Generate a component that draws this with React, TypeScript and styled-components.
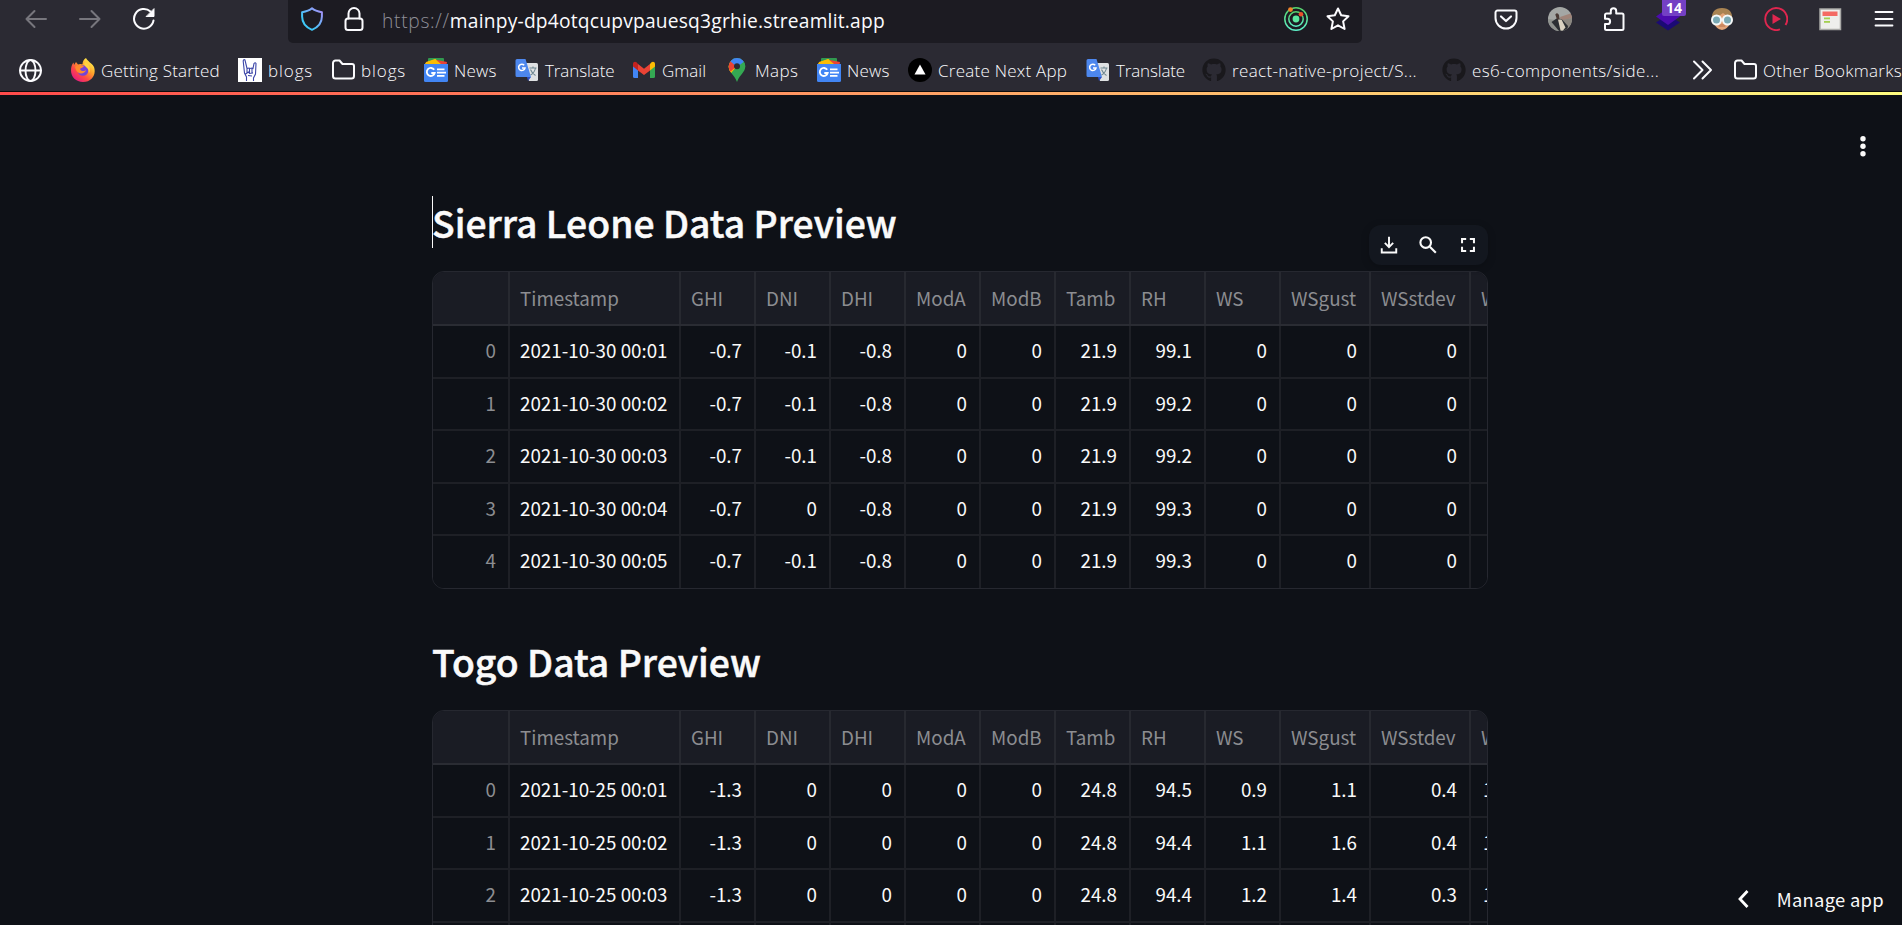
import React from "react";
import styled, { createGlobalStyle } from "styled-components";
import { FaGithub } from "react-icons/fa";

const GlobalStyle = createGlobalStyle`
  *, *::before, *::after { box-sizing: border-box; }
  html, body { margin: 0; padding: 0; background: #0e1117; }
  body { width: 1902px; height: 925px; overflow: hidden; }
  svg { display: block; flex: none; }
`;

const uiFont = `"Open Sans", "Noto Sans", sans-serif`;
const appFont = `"Noto Sans CJK SC", "Noto Sans", sans-serif`;

const Screen = styled.div`
  width: 1902px;
  height: 925px;
  display: flex;
  flex-direction: column;
  overflow: hidden;
`;

/* ---------- browser chrome ---------- */

const Chrome = styled.header`
  flex: none;
  height: 92px;
  background: #2b2a33;
  border-bottom: 1px solid #0c0c0d;
  color: #fbfbfe;
  font-family: ${uiFont};
`;

const NavBar = styled.div`
  height: 43px;
  display: flex;
  align-items: flex-start;
`;

const NavButtons = styled.div`
  width: 288px;
  height: 38px;
  padding-left: 24px;
  display: flex;
  align-items: center;
  gap: 30px;
`;

const UrlBar = styled.div`
  width: 1074px;
  height: 43px;
  padding: 0 12px 5px 12px;
  display: flex;
  align-items: center;
  background: #1c1b22;
  border-radius: 0 0 5px 5px;
`;

const UrlText = styled.div`
  flex: 1;
  margin-left: 16px;
  padding-top: 4px;
  font-size: 19.2px;
  line-height: 26px;
  white-space: nowrap;
  letter-spacing: 0.22px;
`;

const Scheme = styled.span`
  color: #8f8f98;
  font-weight: 300;
  letter-spacing: 0.7px;
`;

const UrlActions = styled.div`
  display: flex;
  gap: 18px;
`;

const Extensions = styled.div`
  flex: 1;
  height: 38px;
  padding-left: 132px;
  display: flex;
  align-items: center;
  gap: 30px;
`;

const BadgeHolder = styled.div`
  position: relative;
`;

const Badge = styled.span`
  position: absolute;
  left: 6px;
  top: -7px;
  width: 24px;
  height: 16px;
  border-radius: 0 0 2px 2px;
  background: #7440c4;
  color: #fff;
  font: 700 14px/16px "Open Sans", sans-serif;
  text-align: center;
`;

const Bookmarks = styled.nav`
  height: 48px;
  padding: 6px 0 0 18px;
  display: flex;
  align-items: center;
`;

const Bookmark = styled.div<{ $w: number }>`
  flex: none;
  width: ${(p) => p.$w}px;
  height: 24px;
  display: flex;
  align-items: center;
  gap: 6px;
`;

const BookmarkLabel = styled.span<{ $ls?: number }>`
  padding-top: 1px;
  font-size: 17px;
  font-weight: 300;
  line-height: 24px;
  white-space: nowrap;
  letter-spacing: ${(p) => p.$ls ?? 0}px;
`;

/* ---------- app ---------- */

const GradientLine = styled.div`
  flex: none;
  height: 3px;
  background: linear-gradient(90deg, #ff4b4b, #fffd80);
`;

const AppView = styled.main`
  flex: 1;
  min-height: 0;
  display: flex;
  justify-content: space-between;
  background: #0e1117;
  color: #fafafa;
  font-family: ${appFont};
`;

const Gutter = styled.div`
  width: 432px;
`;

const Content = styled.div`
  width: 1056px;
  padding-top: 101px;
`;

const SideTools = styled.aside`
  width: 414px;
  display: flex;
  flex-direction: column;
  justify-content: space-between;
  align-items: flex-end;
  padding: 39px 18px 8px 0;
`;

const MenuButton = styled.div`
  margin-right: 9px;
`;

const ManageApp = styled.div`
  display: flex;
  align-items: center;
  gap: 27px;
  font-size: 18.4px;
  line-height: 36px;
  letter-spacing: 0.28px;
  font-weight: 400;
`;

const Preview = styled.section`
  height: 439px;
`;

const TitleRow = styled.div`
  height: 75px;
  display: flex;
  justify-content: space-between;
  align-items: flex-start;
`;

const Title = styled.h2<{ $caret?: boolean }>`
  margin: 0;
  height: 52px;
  border-left: 1px solid ${(p) => (p.$caret ? "#fafafa" : "transparent")};
  font-size: 37.3px;
  line-height: 52px;
  font-weight: 500;
  text-indent: -1px;
  -webkit-text-stroke: 0.5px #fafafa;
  white-space: nowrap;
`;

const FrameTools = styled.div`
  width: 119px;
  height: 40px;
  margin-top: 29px;
  border-radius: 12px;
  background: #13171f;
  box-shadow: 0 2px 8px rgba(0, 0, 0, 0.2);
  display: flex;
  align-items: center;
  justify-content: center;
  gap: 17px;
`;

const Frame = styled.div`
  height: 318px;
  border: 1px solid #262830;
  border-radius: 12px;
  overflow: hidden;
`;

const Row = styled.div<{ $head?: boolean }>`
  display: grid;
  grid-template-columns: 77px 171px 75px 75px 75px 75px 75px 75px 75px 75px 90px 100px 73px;
  height: ${(p) => (p.$head ? 54 : 52.5)}px;
  border-bottom: 2px solid ${(p) => (p.$head ? "#2a2c33" : "#1e2026")};
  background: ${(p) => (p.$head ? "#1a1c24" : "#0e1117")};
  &:last-child { border-bottom: none; }
`;

const Cell = styled.div<{ $head?: boolean; $dim?: boolean }>`
  padding: 0 12px 0 10px;
  border-right: 2px solid ${(p) => (p.$head ? "#272930" : "#1e2026")};
  font-size: 18.8px;
  line-height: ${(p) => (p.$head ? 51 : 48)}px;
  white-space: nowrap;
  text-align: ${(p) => (p.$head ? "left" : "right")};
  color: ${(p) => (p.$dim ? "#8c8d91" : "#fafafa")};
`;

/* ---------- icons ---------- */

const Stroke = ({ size = 24, w = 2, color = "#fbfbfe", children }: { size?: number; w?: number; color?: string; children: React.ReactNode }) => (
  <svg width={size} height={size} viewBox="0 0 24 24" fill="none" stroke={color} strokeWidth={w} strokeLinecap="round" strokeLinejoin="round">
    {children}
  </svg>
);

const BackIcon = () => <Stroke color="#77767d"><path d="M22 12H2.5M10.5 4L2.5 12l8 8" /></Stroke>;
const ForwardIcon = () => <Stroke color="#77767d"><path d="M2 12h19.500M13.500 4l8 8-8 8" /></Stroke>;
const ReloadIcon = () => (
  <Stroke>
    <path d="M21.500 13.500A9.800 9.800 0 1 1 18.500 4.600" />
    <path d="M22 2v7.500h-7.500z" fill="#fbfbfe" strokeWidth="1" />
  </Stroke>
);
const ShieldIcon = () => (
  <svg width="24" height="24" viewBox="0 0 24 24" fill="none">
    <defs>
      <linearGradient id="shield" x1="0" y1="1" x2="1" y2="0">
        <stop offset="0.3" stopColor="#3fc8f8" />
        <stop offset="1" stopColor="#b08cf8" />
      </linearGradient>
    </defs>
    <path d="M12 1.200c2.500 2.200 6 3.300 9.900 4v4.300c0 6-3.400 10.600-9.900 13.300C5.500 20.100 2.100 15.500 2.100 9.500V5.200c3.900-.7 7.400-1.800 9.900-4z" stroke="url(#shield)" strokeWidth="2" strokeLinejoin="round" />
  </svg>
);
const LockIcon = () => <Stroke><rect x="3.500" y="11.500" width="17" height="11.500" rx="2.500" /><path d="M6.500 11.500V6.500a5.500 5.500 0 0 1 11 0v5" /></Stroke>;
const OrbitIcon = () => (
  <svg width="24" height="24" viewBox="0 0 24 24" fill="none">
    <defs>
      <linearGradient id="orbit" x1="0" y1="0" x2="0" y2="1">
        <stop stopColor="#55d06a" />
        <stop offset="1" stopColor="#5ef0c8" />
      </linearGradient>
    </defs>
    <circle cx="12" cy="12" r="11.200" stroke="url(#orbit)" strokeWidth="1.500" />
    <circle cx="12" cy="12" r="7.200" stroke="url(#orbit)" strokeWidth="1.500" />
    <circle cx="12" cy="12" r="3.400" fill="#5be8a0" />
    <circle cx="6.500" cy="2.600" r="2.400" fill="#f0832a" />
    <circle cx="17" cy="7.300" r="2.300" fill="#e8502a" />
  </svg>
);
const StarIcon = () => <Stroke><path d="M12 1.500l3.200 6.800 7.300.9-5.400 5.200 1.500 7.600L12 18.300 5.400 22l1.500-7.600L1.500 9.200l7.300-.9z" /></Stroke>;
const PocketIcon = () => <Stroke><path d="M3.500 3.500h17a2 2 0 0 1 2 2v5.500a10.500 10.500 0 0 1-21 0V5.500a2 2 0 0 1 2-2z" /><path d="M7 9.500l5 4.500 5-4.500" strokeWidth="2.200" /></Stroke>;
const AvatarIcon = () => (
  <svg width="24" height="24" viewBox="0 0 24 24">
    <defs><clipPath id="avatar"><circle cx="12" cy="12" r="12" /></clipPath></defs>
    <g clipPath="url(#avatar)">
      <rect width="24" height="24" fill="#a4a7a5" />
      <path d="M0 12l8 1 5 11H0z" fill="#8f928e" />
      <path d="M12 10l12-4v5l-11 3z" fill="#a08479" />
      <path d="M14 13l10-2v13h-7z" fill="#8b8780" />
      <path d="M3.500 15l5-3.500 5 .5 6.500 7-1 5h-8z" fill="#2c2f33" />
      <path d="M10 12.500l3.500 0 4 8-3 3.500-2-.5z" fill="#dad2c2" />
      <path d="M7.300 7.500q2-2.500 3.700.5l.5 4-2.500.5z" fill="#493a35" />
    </g>
  </svg>
);
const PuzzleIcon = () => <Stroke><path d="M3 9.500V8a1.500 1.500 0 0 1 1.500-1.500h4.300V4a2.700 2.700 0 0 1 5.400 0v2.500H20A1.500 1.500 0 0 1 21.500 8v13.500A1.500 1.500 0 0 1 20 23H4.500A1.500 1.500 0 0 1 3 21.500V17h2.500a2.600 2.600 0 0 0 0-5.200H3z" /></Stroke>;
const StackIcon = () => (
  <svg width="24" height="24" viewBox="0 0 24 24">
    <path d="M0 15.500L12 8l12 7.500-12 8z" fill="#1b0a75" />
    <path d="M0 9.500L12 1l12 8.500-12 8.500z" fill="#4c0cae" />
  </svg>
);
const FaceIcon = () => (
  <svg width="24" height="24" viewBox="0 0 24 24">
    <path d="M2 13C1 5 5 1 12 1s11 4 10 12z" fill="#a98352" />
    <path d="M4 9q5 1 9-3 3 3 7 3v7q-2 6-8 7-6-1-8-7z" fill="#e3a478" />
    <path d="M8 18q4-2 8 0l-1 2H9z" fill="#cc8860" />
    <g fill="#7aa9b4" stroke="#f5f8f8" strokeWidth="2"><circle cx="6.500" cy="13" r="4.500" /><circle cx="17.500" cy="13" r="4.500" /></g>
    <path d="M10.500 12.500h3" stroke="#f5f8f8" strokeWidth="2" />
  </svg>
);
const PlayIcon = () => (
  <svg width="24" height="24" viewBox="0 0 24 24" fill="none">
    <path d="M16 22.400A11 11 0 1 1 21.500 18" stroke="#e0264f" strokeWidth="1.900" />
    <path d="M8.500 7l8.500 5-8.500 5z" fill="#e0264f" />
  </svg>
);
const PageIcon = () => (
  <svg width="24" height="24" viewBox="0 0 24 24">
    <rect x="2" y="2" width="20.500" height="20.500" fill="#eeeeec" stroke="#a9a9a7" strokeWidth="1.500" />
    <rect x="4.500" y="4.500" width="15" height="4.500" fill="#f46a64" />
    <rect x="6" y="10.500" width="6" height="1.800" fill="#a3cf50" />
    <rect x="6" y="14" width="6" height="1.800" fill="#a3cf50" />
  </svg>
);
const MenuIcon = () => <Stroke w={1.8}><path d="M3.500 5h17M3.500 12h17M3.500 18.500h17" /></Stroke>;

const GlobeIcon = () => <Stroke w={1.9}><circle cx="12.500" cy="12.500" r="10.500" /><ellipse cx="12.500" cy="12.500" rx="5" ry="10.500" /><path d="M2 12.500h21" /></Stroke>;
const FolderIcon = () => <Stroke><path d="M2 5a2.500 2.500 0 0 1 2.500-2.500h4L11.500 6H21a2 2 0 0 1 2 2v10a2.500 2.500 0 0 1-2.500 2.500h-16A2.500 2.500 0 0 1 2 18z" /></Stroke>;
const FirefoxIcon = () => (
  <svg width="24" height="24" viewBox="0 0 24 24">
    <defs>
      <linearGradient id="fox" x1="0.850" y1="0.100" x2="0.150" y2="0.950">
        <stop stopColor="#fff44f" /><stop offset="0.350" stopColor="#ffa02a" /><stop offset="0.650" stopColor="#ff4a45" /><stop offset="1" stopColor="#e31587" />
      </linearGradient>
    </defs>
    <path d="M15 0c1 3 6 5 8 9 2.500 7-2 15-11 15C5 24 0 19 0 12.500 0 9 1 6 2.500 4.500L3 7l2-3 2 2.500c2-1 3-.5 4.500-.2C11.500 3.500 13 1 15 0z" fill="url(#fox)" />
    <circle cx="12" cy="12.500" r="5.300" fill="#7344d8" />
    <path d="M4 9c3-3 6-1 9-1-1 2-3 1.500-4 3 1 3 5 2 6 1-1 4-8 5-10 0z" fill="#ff8a2c" />
    <path d="M14 4c5 2 6 8 4 11 0-4-2-5-4-7-1-1-1-3 0-4z" fill="#ffd440" />
  </svg>
);
const HandIcon = () => (
  <svg width="24" height="24" viewBox="0 0 24 24">
    <rect width="24" height="24" fill="#fff" />
    <path d="M8.500 23v-4L6.500 15 5.200 3q.5-2 1.800-1l2 8.500 2-.5 1 .5 2-.5 1 .5 1-5q1.300-1.500 2 0L17.500 16l-2 4v3M9 11v4.500M11.500 10.500V15M14 10.500V15M7.500 16l3-2 1 1.500 3.500-.5M10 17.500l4 .5" fill="none" stroke="#3c46a8" strokeWidth="1.100" />
  </svg>
);
const NewsIcon = () => (
  <svg width="24" height="24" viewBox="0 0 24 24">
    <rect x="4" y="0" width="16" height="8" rx="1" fill="#31994f" />
    <path d="M1 5l11-4 2 7H2z" fill="#fbbc04" />
    <path d="M13 2l10 2-1 5-10-1z" fill="#ea4335" />
    <path d="M2 4l9-3 6 5H2z" fill="#fbbc04" />
    <path d="M0 6h24v16.500a1.500 1.500 0 0 1-1.500 1.500h-21A1.500 1.500 0 0 1 0 22.500z" fill="#4285f4" />
    <path d="M10.200 11.800A4 4 0 1 0 10.700 15H7.300" fill="none" stroke="#fff" strokeWidth="1.800" />
    <path d="M13 11.300h7.500M13 14.600h9M13 17.900h7.500" stroke="#fff" strokeWidth="1.700" />
  </svg>
);
const TranslateIcon = () => (
  <svg width="24" height="24" viewBox="0 0 24 24">
    <path d="M9 5h12.500A1.500 1.500 0 0 1 23 6.500v15a1.500 1.500 0 0 1-1.500 1.500H14z" fill="#dfe1e3" />
    <path d="M12 19h4l-3 4z" fill="#2c4fc4" />
    <path d="M2 1h8.500L16 19H2a1.500 1.500 0 0 1-1.500-1.500v-15A1.500 1.500 0 0 1 2 1z" fill="#4d87ee" />
    <path d="M9.200 7.200A3.200 3.200 0 1 0 10 10H7" fill="none" stroke="#fff" strokeWidth="1.500" />
    <path d="M14.500 10h7M18 8.500V10M20.500 10q-1 5-5 7M15.500 11.500q1.500 4 5 6" fill="none" stroke="#6f8791" strokeWidth="1.100" />
  </svg>
);
const GmailIcon = () => (
  <svg width="24" height="24" viewBox="0 0 24 24">
    <path d="M1 7l5 3.500V20H2.500A1.500 1.500 0 0 1 1 18.500z" fill="#4285f4" />
    <path d="M23 7l-5 3.500V20h3.500a1.500 1.500 0 0 0 1.500-1.500z" fill="#34a853" />
    <path d="M18 6l1.500-1.700C21 3 23 4 23 6v2.500l-5 4z" fill="#fbbc04" />
    <path d="M6 6l6 4.700L18 6v6.500l-6 4.600-6-4.600z" fill="#ea4335" />
    <path d="M6 6L4.500 4.300C3 3 1 4 1 6v2.500l5 4z" fill="#c5221f" />
  </svg>
);
const MapsIcon = () => (
  <svg width="24" height="24" viewBox="0 0 24 24">
    <defs><clipPath id="pin"><path d="M12 0a8.300 8.300 0 0 1 8.300 8.300c0 6-5.300 8-8.300 15.700C9 16.300 3.700 14.300 3.700 8.300A8.300 8.300 0 0 1 12 0z" /></clipPath></defs>
    <g clipPath="url(#pin)">
      <rect width="24" height="24" fill="#34a853" />
      <path d="M12 8L0 22V4z" fill="#fbbc04" />
      <path d="M12 8L3 18V9l3-6z" fill="#fbbc04" />
      <path d="M0 8l6-6 6 6-7 6z" fill="#ea4335" />
      <path d="M5 3L10-2h12l-2 5-8 6z" fill="#4285f4" />
      <path d="M19 4l-9 11 4 0 8-8z" fill="#34a853" />
    </g>
    <circle cx="12" cy="8.300" r="3" fill="#2b2a33" />
  </svg>
);
const NextIcon = () => (
  <svg width="24" height="24" viewBox="0 0 24 24"><circle cx="12" cy="12" r="12" fill="#000" /><path d="M12 6.500l5.500 10h-11z" fill="#fff" /></svg>
);
const GithubIcon = () => <FaGithub size={24} color="#19181c" />;
const OverflowIcon = () => <Stroke><path d="M4 3.500l8.500 8.500L4 20.500M12.500 3.500L21 12l-8.500 8.500" /></Stroke>;

const DownloadIcon = () => <Stroke size={20} w={2.3} color="#fafafa"><path d="M12 2v12M7 9.500l5 5 5-5M3.300 16v5h17.400v-5" strokeLinecap="butt" strokeLinejoin="miter" /></Stroke>;
const SearchIcon = () => <Stroke size={24} w={2.100} color="#fafafa"><circle cx="9.700" cy="9.600" r="5.300" /><path d="M13.800 13.800l6 6" strokeLinecap="butt" /></Stroke>;
const FullscreenIcon = () => <Stroke size={22} w={2.200} color="#fafafa"><path d="M5.500 10V5.500H10M14 5.500h4.500V10M18.500 14v4.500H14M10 18.500H5.500V14" strokeLinecap="butt" strokeLinejoin="miter" /></Stroke>;

/* ---------- data ---------- */

type BookmarkItem = { w: number; icon: React.ReactNode; label?: string; ls?: number };

const bookmarks: BookmarkItem[] = [
  { w: 53, icon: <GlobeIcon /> },
  { w: 167, icon: <FirefoxIcon />, label: "Getting Started", ls: 0.2 },
  { w: 93, icon: <HandIcon />, label: "blogs", ls: 0.9 },
  { w: 93, icon: <FolderIcon />, label: "blogs", ls: 0.9 },
  { w: 91, icon: <NewsIcon />, label: "News", ls: 0.2 },
  { w: 117, icon: <TranslateIcon />, label: "Translate", ls: -0.1 },
  { w: 93, icon: <GmailIcon />, label: "Gmail" },
  { w: 92, icon: <MapsIcon />, label: "Maps", ls: 0.4 },
  { w: 91, icon: <NewsIcon />, label: "News", ls: 0.2 },
  { w: 178, icon: <NextIcon />, label: "Create Next App", ls: 0.24 },
  { w: 116, icon: <TranslateIcon />, label: "Translate", ls: -0.15 },
  { w: 240, icon: <GithubIcon />, label: "react-native-project/S...", ls: 0.35 },
  { w: 248, icon: <GithubIcon />, label: "es6-components/side...", ls: 0.43 },
  { w: 43, icon: <OverflowIcon /> },
  { w: 170, icon: <FolderIcon />, label: "Other Bookmarks", ls: 0.28 },
];

const columns = ["", "Timestamp", "GHI", "DNI", "DHI", "ModA", "ModB", "Tamb", "RH", "WS", "WSgust", "WSstdev", "WD"];

const sierraLeone = [
  ["0", "2021-10-30 00:01", "-0.7", "-0.1", "-0.8", "0", "0", "21.9", "99.1", "0", "0", "0", "0"],
  ["1", "2021-10-30 00:02", "-0.7", "-0.1", "-0.8", "0", "0", "21.9", "99.2", "0", "0", "0", "0"],
  ["2", "2021-10-30 00:03", "-0.7", "-0.1", "-0.8", "0", "0", "21.9", "99.2", "0", "0", "0", "0"],
  ["3", "2021-10-30 00:04", "-0.7", "0", "-0.8", "0", "0", "21.9", "99.3", "0", "0", "0", "0"],
  ["4", "2021-10-30 00:05", "-0.7", "-0.1", "-0.8", "0", "0", "21.9", "99.3", "0", "0", "0", "0"],
];

const togo = [
  ["0", "2021-10-25 00:01", "-1.3", "0", "0", "0", "0", "24.8", "94.5", "0.9", "1.1", "0.4", "122.1"],
  ["1", "2021-10-25 00:02", "-1.3", "0", "0", "0", "0", "24.8", "94.4", "1.1", "1.6", "0.4", "122.1"],
  ["2", "2021-10-25 00:03", "-1.3", "0", "0", "0", "0", "24.8", "94.4", "1.2", "1.4", "0.3", "122.1"],
  ["3", "2021-10-25 00:04", "-1.2", "0", "0", "0", "0", "24.8", "94.3", "1.2", "1.6", "0.3", "122.1"],
];

const DataFrame = ({ rows }: { rows: string[][] }) => (
  <Frame>
    <Row $head>
      {columns.map((c) => <Cell key={c} $head $dim>{c}</Cell>)}
    </Row>
    {rows.map((r) => (
      <Row key={r[0]}>
        {r.map((v, i) => <Cell key={i} $dim={i === 0}>{v}</Cell>)}
      </Row>
    ))}
  </Frame>
);

export default function App() {
  return (
    <Screen>
      <GlobalStyle />
      <Chrome>
        <NavBar>
          <NavButtons><BackIcon /><ForwardIcon /><ReloadIcon /></NavButtons>
          <UrlBar>
            <UrlActions><ShieldIcon /><LockIcon /></UrlActions>
            <UrlText><Scheme>https://</Scheme>mainpy-dp4otqcupvpauesq3grhie.streamlit.app</UrlText>
            <UrlActions><OrbitIcon /><StarIcon /></UrlActions>
          </UrlBar>
          <Extensions>
            <PocketIcon />
            <AvatarIcon />
            <PuzzleIcon />
            <BadgeHolder><StackIcon /><Badge>14</Badge></BadgeHolder>
            <FaceIcon />
            <PlayIcon />
            <PageIcon />
            <MenuIcon />
          </Extensions>
        </NavBar>
        <Bookmarks>
          {bookmarks.map((b, i) => (
            <Bookmark key={i} $w={b.w}>
              {b.icon}
              {b.label && <BookmarkLabel $ls={b.ls}>{b.label}</BookmarkLabel>}
            </Bookmark>
          ))}
        </Bookmarks>
      </Chrome>
      <GradientLine />
      <AppView>
        <Gutter />
        <Content>
          <Preview>
            <TitleRow>
              <Title $caret>Sierra Leone Data Preview</Title>
              <FrameTools><DownloadIcon /><SearchIcon /><FullscreenIcon /></FrameTools>
            </TitleRow>
            <DataFrame rows={sierraLeone} />
          </Preview>
          <Preview>
            <TitleRow><Title>Togo Data Preview</Title></TitleRow>
            <DataFrame rows={togo} />
          </Preview>
        </Content>
        <SideTools>
          <MenuButton>
            <svg width="24" height="24" viewBox="0 0 24 24" fill="#fafafa">
              <circle cx="12" cy="4.700" r="2.700" /><circle cx="12" cy="12.200" r="2.700" /><circle cx="12" cy="19.700" r="2.700" />
            </svg>
          </MenuButton>
          <ManageApp>
            <svg width="14" height="20" viewBox="0 0 14 20" fill="none" stroke="#fff" strokeWidth="2.800"><path d="M11.500 2L4 10l7.500 8" /></svg>
            Manage app
          </ManageApp>
        </SideTools>
      </AppView>
    </Screen>
  );
}
